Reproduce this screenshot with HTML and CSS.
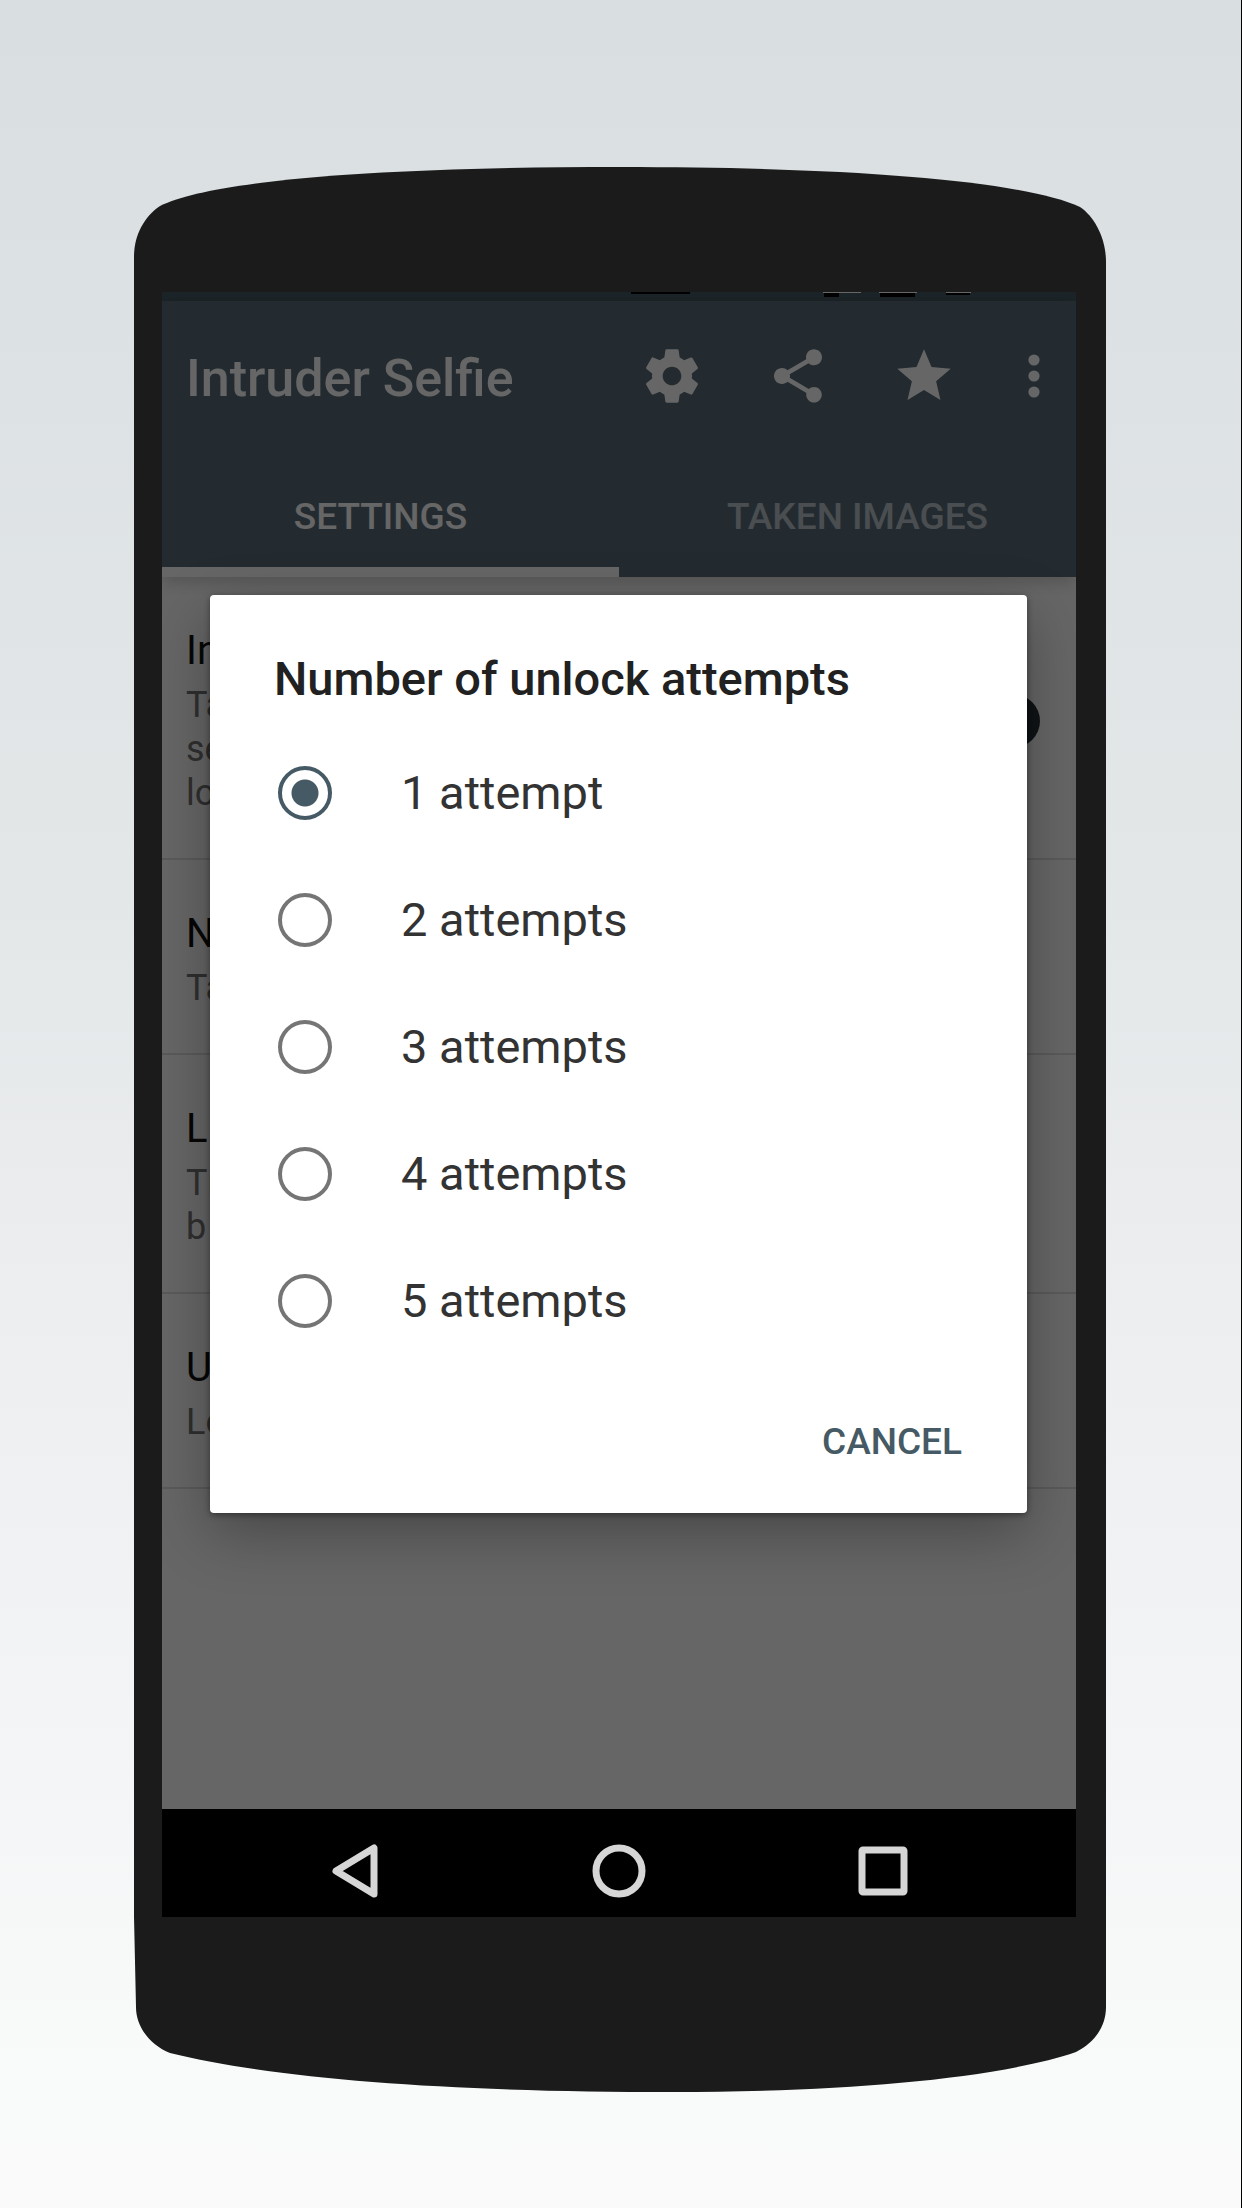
FILE: index.html
```html
<!DOCTYPE html>
<html lang="en">
<head>
  <meta charset="UTF-8" />
  <meta name="viewport" content="width=device-width, initial-scale=1" />
  <title>Intruder Selfie</title>
  <link rel="stylesheet" href="styles.css">
</head>
<body>
  <div class="phone">
    <svg class="cap cap-top" viewBox="0 0 972 125" preserveAspectRatio="none" aria-hidden="true">
      <path d="M0 125V90C0 68 10 50 26 39C78 13 250 0 486 0C720 0 890 14 946 40C961 50 972 72 972 95V125Z" />
    </svg>

    <div class="screen">
      <div class="app">
        <svg class="status-bar" viewBox="0 0 914 9" preserveAspectRatio="none" aria-hidden="true">
          <path d="M469 0h59v2h-59zM662 1h15v4h-15zM718 1h35v4h-35zM784 1h24v2h-24z" />
          <path class="light" d="M661 0h38v1h-38zM717 0h38v1h-38zM784 0h25v1h-25z" />
        </svg>
        <header class="app-bar">
          <div class="toolbar">
            <h1>Intruder Selfie</h1>
            <button class="icon-btn" aria-label="Settings">
              <svg viewBox="0 0 24 24"><path d="M19.43 12.98c.04-.32.07-.64.07-.98s-.03-.66-.07-.98l2.11-1.65c.19-.15.24-.42.12-.64l-2-3.46c-.12-.22-.39-.3-.61-.22l-2.49 1c-.52-.4-1.08-.73-1.69-.98l-.38-2.65C14.46 2.18 14.25 2 14 2h-4c-.25 0-.46.18-.49.42l-.38 2.65c-.61.25-1.17.59-1.69.98l-2.49-1c-.23-.09-.49 0-.61.22l-2 3.46c-.13.22-.07.49.12.64l2.11 1.65c-.04.32-.07.65-.07.98s.03.66.07.98l-2.11 1.65c-.19.15-.24.42-.12.64l2 3.46c.12.22.39.3.61.22l2.49-1c.52.4 1.08.73 1.69.98l.38 2.65c.03.24.24.42.49.42h4c.25 0 .46-.18.49-.42l.38-2.65c.61-.25 1.17-.59 1.69-.98l2.49 1c.23.09.49 0 .61-.22l2-3.46c.12-.22.07-.49-.12-.64l-2.11-1.65zM12 15.5c-1.93 0-3.5-1.57-3.5-3.5s1.57-3.5 3.5-3.5 3.5 1.57 3.5 3.5-1.57 3.5-3.5 3.5z" /></svg>
            </button>
            <button class="icon-btn" aria-label="Share">
              <svg viewBox="0 0 24 24"><path d="M18 16.08c-.76 0-1.44.3-1.96.77L8.91 12.7c.05-.23.09-.46.09-.7s-.04-.47-.09-.7l7.05-4.11c.54.5 1.25.81 2.04.81 1.66 0 3-1.34 3-3s-1.34-3-3-3-3 1.34-3 3c0 .24.04.47.09.7L8.04 9.81C7.5 9.31 6.79 9 6 9c-1.66 0-3 1.34-3 3s1.34 3 3 3c.79 0 1.5-.31 2.04-.81l7.12 4.16c-.05.21-.08.43-.08.65 0 1.61 1.31 2.92 2.92 2.92s2.92-1.31 2.92-2.92-1.31-2.92-2.92-2.92z" /></svg>
            </button>
            <button class="icon-btn" aria-label="Rate">
              <svg viewBox="0 0 24 24"><path d="M12 17.27L18.18 21l-1.64-7.03L22 9.24l-7.19-.61L12 2 9.19 8.63 2 9.24l5.46 4.73L5.82 21z" /></svg>
            </button>
            <button class="icon-btn more" aria-label="More options">
              <svg viewBox="0 0 24 24"><circle cx="12" cy="6" r="2.1" /><circle cx="12" cy="12" r="2.1" /><circle cx="12" cy="18" r="2.1" /></svg>
            </button>
          </div>
          <nav class="tabs">
            <a href="#settings" class="tab active">SETTINGS</a>
            <a href="#images" class="tab">TAKEN IMAGES</a>
          </nav>
        </header>

        <main id="settings">
          <div class="setting">
            <div>
              <label class="name" for="enabled">Intro</label>
              <p>Take<br>self<br>lock</p>
            </div>
            <input type="checkbox" id="enabled" class="switch" checked />
          </div>
          <div class="setting">
            <div>
              <div class="name">No.</div>
              <p>Take</p>
            </div>
          </div>
          <div class="setting">
            <div>
              <div class="name">List</div>
              <p>Tip<br>b</p>
            </div>
          </div>
          <div class="setting">
            <div>
              <div class="name">Use</div>
              <p>Log</p>
            </div>
          </div>
        </main>

        <div class="scrim">
          <form class="dialog" role="dialog" aria-labelledby="dialogTitle">
            <h2 id="dialogTitle">Number of unlock attempts</h2>
            <label class="option"><input type="radio" name="attempts" value="1" checked /> 1 attempt</label>
            <label class="option"><input type="radio" name="attempts" value="2" /> 2 attempts</label>
            <label class="option"><input type="radio" name="attempts" value="3" /> 3 attempts</label>
            <label class="option"><input type="radio" name="attempts" value="4" /> 4 attempts</label>
            <label class="option"><input type="radio" name="attempts" value="5" /> 5 attempts</label>
            <div class="actions">
              <button type="button" class="cancel">CANCEL</button>
            </div>
          </form>
        </div>
      </div>

      <div class="nav-bar">
        <button class="icon-btn" aria-label="Back">
          <svg viewBox="0 0 64 64"><path d="M51 9V55L13 32Z" /></svg>
        </button>
        <button class="icon-btn" aria-label="Home">
          <svg viewBox="0 0 64 64"><circle cx="32" cy="32" r="23" /></svg>
        </button>
        <button class="icon-btn" aria-label="Recent apps">
          <svg viewBox="0 0 64 64"><rect x="11" y="11" width="42" height="42" rx="1" /></svg>
        </button>
      </div>
    </div>

    <svg class="cap cap-bottom" viewBox="0 0 972 175" preserveAspectRatio="none" aria-hidden="true">
      <path d="M0 0H972V90C972 110 960 126 942 135C860 163 700 175 538 175C330 175 150 164 36 136C16 128 2 110 2 90Z" />
    </svg>
  </div>
</body>
</html>
```
FILE: styles.css
```css
* { box-sizing: border-box; }
body {
  display: flex;
  flex-direction: column;
  margin: 0;
  min-height: 100vh;
  padding: 167px 135px 116px 134px;
  border-right: 1px solid #000;
  background: linear-gradient(#d9dee1, #e3e7e8 40%, #eeeff1 62%, #f9fafa 95%, #fafafa);
  font-family: Roboto, sans-serif;
}
h1, h2, p { margin: 0; }
button {
  padding: 0;
  border: none;
  background: none;
  font-family: inherit;
  cursor: pointer;
}
.phone {
  flex: 1;
  display: flex;
  flex-direction: column;
}
.cap {
  display: block;
  width: 100%;
  fill: #1b1b1b;
}
.cap-top { height: 125px; }
.cap-bottom { height: 175px; }
.screen {
  flex: 1;
  display: flex;
  flex-direction: column;
  padding: 0 30px 0 28px;
  background: #1b1b1b;
}
.app {
  position: relative;
  flex: 1;
  overflow: hidden;
  background: #fff;
}

/* app bar */
.status-bar {
  display: block;
  width: 100%;
  height: 9px;
  background: #455a64;
}
.status-bar .light { fill: #fff; }
.app-bar {
  background: #576d7a;
  color: #fff;
  box-shadow: 0 4px 16px rgba(0, 0, 0, 0.2);
}
.toolbar {
  display: flex;
  align-items: center;
  gap: 62px;
  height: 150px;
  padding: 0 10px 0 24px;
}
.toolbar h1 {
  flex: 1;
  padding-top: 4px;
  font-size: 52px;
  font-weight: 500;
  white-space: nowrap;
}
.icon-btn {
  width: 64px;
  height: 64px;
}
.icon-btn svg {
  display: block;
  width: 100%;
  height: 100%;
}
.toolbar .icon-btn { fill: #fff; }
.more { margin-left: -16px; }
.tabs {
  display: flex;
  height: 126px;
}
.tab {
  flex: 1;
  padding: 44px 20px 0 0;
  border-bottom: 10px solid transparent;
  color: rgba(255, 255, 255, 0.6);
  font-size: 37px;
  font-weight: 500;
  line-height: 44px;
  text-align: center;
  text-decoration: none;
}
.tab + .tab { padding: 44px 0 0 20px; }
.tab.active {
  border-color: #fff;
  color: #fff;
}

/* settings list */
.setting {
  display: flex;
  align-items: center;
  justify-content: space-between;
  padding: 50px 36px 43px 24px;
  border-bottom: 2px solid #e0e0e0;
}
.name {
  display: block;
  font-size: 40px;
  line-height: 48px;
  color: #111;
}
.setting p {
  margin-top: 8px;
  font-size: 36px;
  line-height: 44px;
  color: #757575;
}
.switch {
  appearance: none;
  width: 54px;
  height: 54px;
  margin: 0;
  border-radius: 50%;
  background: #263238;
}

/* dialog */
.scrim {
  position: absolute;
  inset: 0;
  padding: 303px 49px 0 48px;
  background: rgba(0, 0, 0, 0.6);
}
.dialog {
  padding: 56px 65px 34px 64px;
  border-radius: 4px;
  background: #fff;
  box-shadow: 0 20px 60px rgba(0, 0, 0, 0.3), 0 2px 6px rgba(0, 0, 0, 0.4);
}
.dialog h2 {
  margin-bottom: 22px;
  font-size: 47px;
  font-weight: 500;
  line-height: 56px;
  color: #212121;
}
.option {
  display: flex;
  align-items: center;
  gap: 69px;
  height: 127px;
  padding-left: 4px;
  font-size: 47px;
  color: #333;
}
.option input {
  appearance: none;
  width: 54px;
  height: 54px;
  margin: 0;
  border: 4px solid #757575;
  border-radius: 50%;
}
.option input:checked {
  border-color: #455a64;
  background: radial-gradient(circle, #455a64 13px, #fff 14px);
}
.actions {
  display: flex;
  justify-content: flex-end;
  padding-top: 40px;
}
.cancel {
  height: 75px;
  font-size: 37px;
  font-weight: 500;
  color: #455a64;
}

/* system navigation */
.nav-bar {
  display: flex;
  justify-content: center;
  gap: 200px;
  padding: 30px 0 14px;
  background: #000;
}
.nav-bar svg {
  fill: none;
  stroke: #d6d6d6;
  stroke-width: 7;
  stroke-linejoin: round;
}
```
